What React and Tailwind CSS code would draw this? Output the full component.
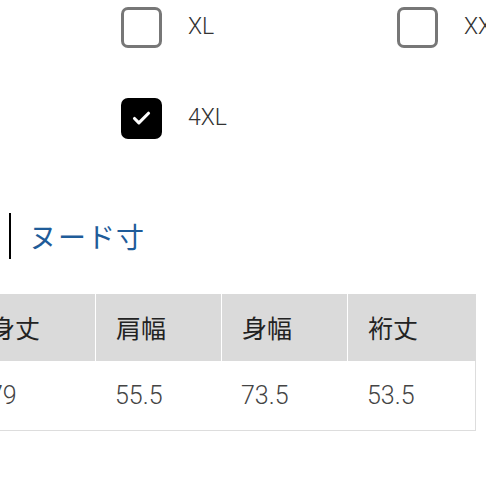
import { Check } from 'lucide-react'

const sizes = [
  { label: 'XL', checked: false },
  { label: 'XXL', checked: false },
  { label: '4XL', checked: true },
]

const headers = ['身丈', '肩幅', '身幅', '裄丈']
const values = ['79', '55.5', '73.5', '53.5']

function SizeOption({ label, checked }) {
  return (
    <div className="flex items-center gap-[26px] h-[41px]">
      {checked ? (
        <span className="size-[41px] shrink-0 rounded-[7px] bg-black flex items-center justify-center">
          <Check className="size-[21px] text-white" strokeWidth={3.6} />
        </span>
      ) : (
        <span className="size-[41px] shrink-0 rounded-[7px] border-[3px] border-[#777] bg-white" />
      )}
      <span className="text-[23px] font-light text-[#333] whitespace-nowrap">{label}</span>
    </div>
  )
}

export default function App() {
  return (
    <div className="w-[486px] h-[486px] overflow-hidden bg-white font-['Roboto','Noto_Sans_CJK_JP',sans-serif]">
      <div className="pl-[121px] pt-[7px] grid grid-cols-[276px_276px] gap-y-[50px]">
        {sizes.map(s => <SizeOption key={s.label} {...s} />)}
      </div>

      <div className="mt-[74px] flex items-center h-[46px] pl-[9px]">
        <span className="w-[2px] h-[46px] bg-black" />
        <span className="ml-[18px] text-[28px] tracking-[1px] text-[#1f5c99] font-['Noto_Sans_CJK_JP',sans-serif]">ヌード寸</span>
      </div>

      <div className="mt-[35px] ml-[-30px] w-[506px] border-r border-b border-[#ddd] font-['Noto_Sans_CJK_JP',sans-serif]">
        <div className="grid grid-cols-[125px_125px_125px_128px] gap-x-[1px] bg-white h-[67px]">
          {headers.map(h => (
            <div key={h} className="bg-[#dadada] flex items-center pl-[20px] text-[25px] text-[#222]">{h}</div>
          ))}
        </div>
        <div className="grid grid-cols-[125px_125px_125px_128px] gap-x-[1px] h-[69px]">
          {values.map(v => (
            <div key={v} className="flex items-center pl-[19px] text-[25px] font-light text-[#444] font-['Roboto',sans-serif]">{v}</div>
          ))}
        </div>
      </div>
    </div>
  )
}
